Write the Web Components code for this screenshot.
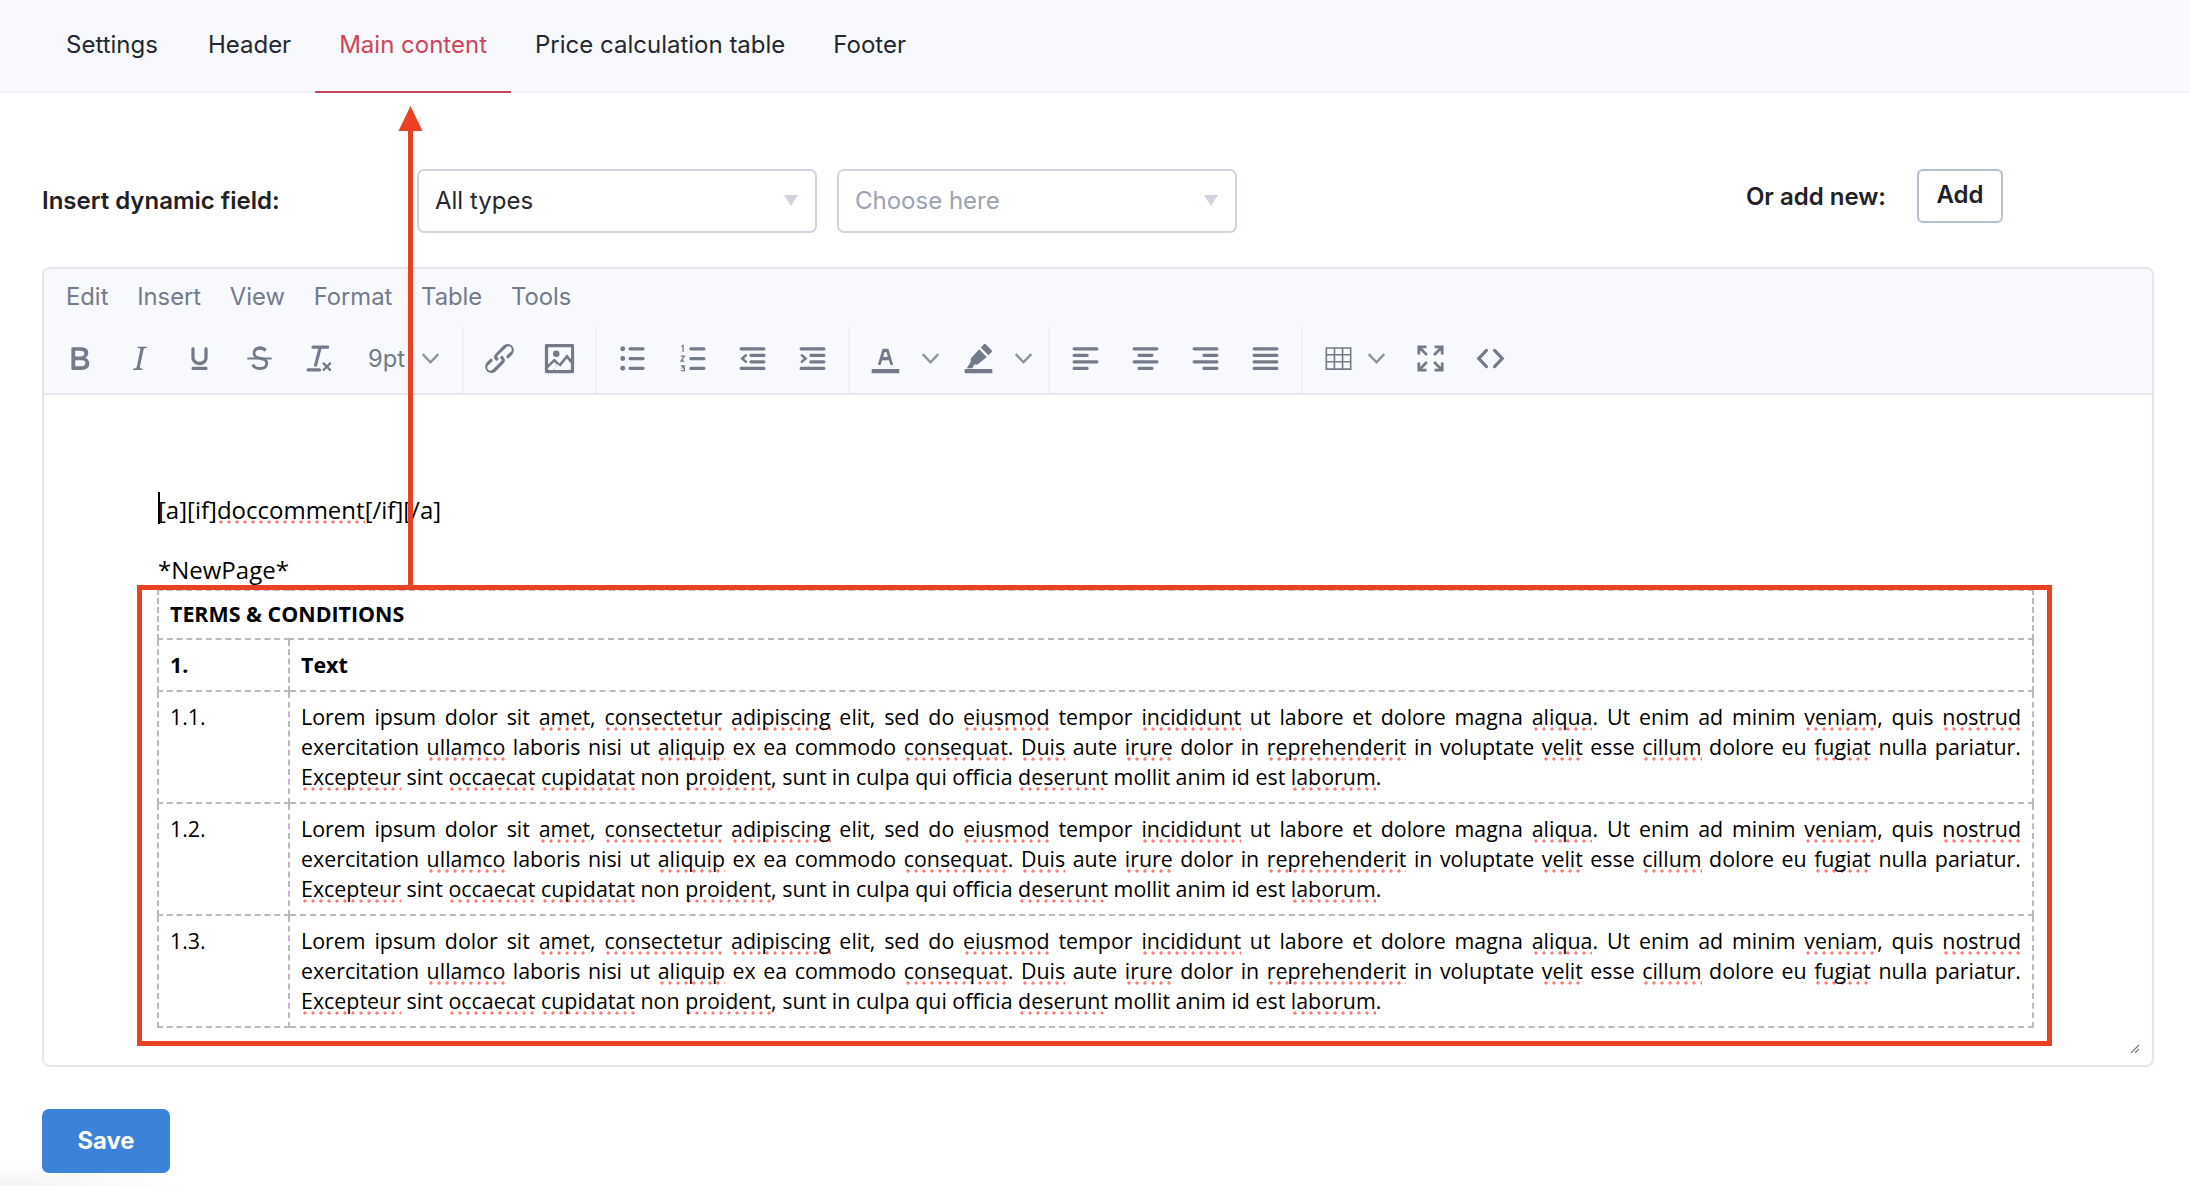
<!DOCTYPE html>
<html lang="en">
<head>
<meta charset="utf-8">
<title>Main content</title>
<style>
  html, body { margin: 0; padding: 0; }
  body {
    position: relative;
    width: 2190px;
    height: 1186px;
    overflow: hidden;
    font-family: Inter, "Liberation Sans", sans-serif;
    background: radial-gradient(ellipse 190px 22px at 0 100%, #f3f3f3, #fff);
  }
</style>
</head>
<body>
<tab-bar>
  <tab-item>Settings</tab-item>
  <tab-item>Header</tab-item>
  <tab-item active>Main content</tab-item>
  <tab-item>Price calculation table</tab-item>
  <tab-item>Footer</tab-item>
</tab-bar>
<field-row>
  <pick-list>All types</pick-list>
  <pick-list placeholder>Choose here</pick-list>
</field-row>
<rich-editor>
  <terms-table></terms-table>
</rich-editor>
<save-button>Save</save-button>
<arrow-overlay></arrow-overlay>

<script>
class TabBar extends HTMLElement {
    constructor() {
        super();
        this.attachShadow({mode: "open"});
    }
    connectedCallback() {
        this.shadowRoot.innerHTML = /* html */`
        <style>
            :host {
                display: flex;
                box-sizing: border-box;
                height: 93px;
                padding-left: 42px;
                background: #f8f9fd;
                border-bottom: 2px solid #f1f2f7;
            }
            ::slotted(tab-item:first-child) { margin-right: 2px; }
        </style>
        <slot></slot>`;
    }
}

class TabItem extends HTMLElement {
    constructor() {
        super();
        this.attachShadow({mode: "open"});
    }
    connectedCallback() {
        this.shadowRoot.innerHTML = /* html */`
        <style>
            :host {
                display: block;
                box-sizing: border-box;
                height: 93px;
                padding: 28px 24px 0;
                font: 400 24px/33px Inter, sans-serif;
                color: #25272e;
            }
            :host([active]) {
                color: #d0435a;
                border-bottom: 2px solid #d0435a;
            }
        </style>
        <slot></slot>`;
    }
}

class FieldRow extends HTMLElement {
    constructor() {
        super();
        this.attachShadow({mode: "open"});
    }
    connectedCallback() {
        this.shadowRoot.innerHTML = /* html */`
        <style>
            :host {
                display: flex;
                align-items: flex-start;
                gap: 20px;
                margin: 76px 187px 34px 42px;
                height: 64px;
            }
            .label {
                width: 355px;
                font: 600 24px/63px Inter, sans-serif;
                color: #1f2127;
            }
            .add {
                display: flex;
                align-items: center;
                gap: 31px;
                margin-left: auto;
                font: 600 24px/33px Inter, sans-serif;
                color: #1f2127;
            }
            .btn {
                box-sizing: border-box;
                width: 86px;
                height: 54px;
                border: 2px solid #b7c0cd;
                border-radius: 6px;
                text-align: center;
                line-height: 48px;
            }
        </style>
        <div class="label">Insert dynamic field:</div>
        <slot></slot>
        <div class="add"><span>Or add new:</span><div class="btn">Add</div></div>`;
    }
}

class PickList extends HTMLElement {
    constructor() {
        super();
        this.attachShadow({mode: "open"});
    }
    connectedCallback() {
        this.shadowRoot.innerHTML = /* html */`
        <style>
            :host {
                display: flex;
                align-items: center;
                justify-content: space-between;
                box-sizing: border-box;
                width: 400px;
                height: 64px;
                padding: 0 17px 1px 16px;
                border: 2px solid #d0d4e0;
                border-radius: 7px;
                font: 400 24px/33px Inter, sans-serif;
                color: #25272e;
            }
            :host([placeholder]) { color: #9ba3b2; }
            .caret {
                width: 0;
                height: 0;
                border-left: 7px solid transparent;
                border-right: 7px solid transparent;
                border-top: 11px solid #cfd3df;
            }
        </style>
        <slot></slot><span class="caret"></span>`;
    }
}

const ICONS = {
    bold: '<path d="M7.8 19c-.3 0-.5 0-.6-.2l-.2-.5V5.7c0-.2 0-.4.2-.5l.6-.2h5c1.5 0 2.7.3 3.5 1 .7.6 1.1 1.4 1.1 2.5a3 3 0 0 1-.6 1.9c-.4.6-1 1-1.6 1.2.4.1.9.3 1.3.6s.8.7 1 1.2c.4.4.5 1 .5 1.6 0 1.3-.4 2.3-1.3 3-.8.7-2.1 1-3.8 1H7.8zm5-8.3c.6 0 1.2-.1 1.6-.5.4-.3.6-.7.6-1.3 0-1.1-.8-1.7-2.3-1.7H9.3v3.5h3.4zm.5 6c.7 0 1.3-.1 1.7-.4.4-.4.6-.9.6-1.5s-.2-1-.7-1.4c-.4-.3-1-.4-2-.4H9.4v3.8h4z"/>',
    italic: '<path d="M16.7 4.7l-.1.9h-.3c-.6 0-1 0-1.4.3-.3.3-.4.6-.5 1.1l-2.1 9.8v.6c0 .5.4.8 1.4.8h.2l-.2.8H8l.2-.8h.2c1.1 0 1.8-.5 2-1.5l2-9.8.1-.5c0-.6-.4-.8-1.4-.8h-.3l.2-.9h5.8z"/>',
    underline: '<path d="M16 5c.6 0 1 .4 1 1v5.5a4 4 0 0 1-.4 1.8l-1 1.4a5.3 5.3 0 0 1-5.5 1 5 5 0 0 1-1.6-1c-.5-.4-.8-.9-1.1-1.4a4 4 0 0 1-.4-1.8V6c0-.6.4-1 1-1s1 .4 1 1v5.5c0 .3 0 .6.2 1l.6.7a3.3 3.3 0 0 0 2.2.8 3.4 3.4 0 0 0 2.2-.8c.3-.2.4-.5.6-.8l.2-.9V6c0-.6.4-1 1-1zM8 17h8c.6 0 1 .4 1 1s-.4 1-1 1H8a1 1 0 0 1 0-2z"/>',
    strike: '<path d="M15.6 8.5c-.5-.7-1-1.1-1.3-1.3-.6-.4-1.3-.6-2-.6-2.7 0-2.8 1.7-2.8 2.1 0 1.6 1.8 2 3.2 2.3 4.4.9 4.6 2.8 4.6 3.9 0 1.4-.7 4.1-5 4.1A6.2 6.2 0 0 1 7 16.4l1.5-1.1c.4.6 1.6 2 3.7 2 1.6 0 2.5-.4 3-1 .3-.4.4-.9.4-1.5 0-.8-.3-1.3-2.5-1.8-2.2-.5-5.3-1-5.3-4.2 0-3 2.3-4.4 4.5-4.4 1.6 0 2.8.6 4.3 2.1l-1.5 1z"/><path d="M4.5 11.4h15v1.2h-15z"/>',
    clear: '<path d="M13.2 6l-2.6 10.2a1 1 0 0 1-1 .8h-.2a.8.8 0 0 1-.8-1l2.6-10H8a1 1 0 1 1 0-2h9a1 1 0 0 1 0 2h-3.8zM5 18h7a1 1 0 0 1 0 2H5a1 1 0 0 1 0-2zm13 1.5L16.5 18 15 19.5a.7.7 0 0 1-1-1l1.5-1.5-1.5-1.5a.7.7 0 0 1 1-1l1.5 1.5 1.5-1.5a.7.7 0 0 1 1 1L17.5 17l1.5 1.5a.7.7 0 0 1-1 1z"/>',
    link: '<path d="M6.2 12.3a1 1 0 0 1 1.4 1.4l-2 2a2 2 0 1 0 2.6 2.8l4.8-4.8a1 1 0 0 0 0-1.4 1 1 0 1 1 1.4-1.3 2.9 2.9 0 0 1 0 4L9.6 20a3.9 3.9 0 0 1-5.5-5.5l2-2zm11.6-.6a1 1 0 0 1-1.4-1.4l2-2a2 2 0 1 0-2.6-2.8L11 10a1 1 0 0 0 0 1.4A1 1 0 1 1 9.6 13a2.9 2.9 0 0 1 0-4L14.4 4a3.9 3.9 0 0 1 5.5 5.5l-2 2z"/>',
    image: '<path d="M5 15.7l3.3-3.2c.3-.3.7-.3 1 0L12 15l4.1-5c.3-.4.8-.4 1 0l2 2.5V5H5v10.7zM5 18v1h3l2.8-2.9-2-2L5 17.9zm14-3l-2.5-3-4 5-1.6-1.6L8.4 19H19v-4zM4 3h16c.6 0 1 .4 1 1v16c0 .6-.4 1-1 1H4a1 1 0 0 1-1-1V4c0-.6.4-1 1-1zm6 8a2 2 0 1 1 0-4 2 2 0 0 1 0 4z"/>',
    bullets: '<circle cx="6" cy="6" r="1.5"/><circle cx="6" cy="12" r="1.5"/><circle cx="6" cy="18" r="1.5"/><path class="s" d="M10.5 6h8M10.5 12h8M10.5 18h8"/>',
    numbers: '<path class="s" d="M11 6h8M11 12h8M11 18h8"/><path class="t" d="M5.2 4.6l1-.6v4M5 10.6h2l-2 3h2M5 16.6h2l-1 1.2h1v1.6H5"/>',
    outdent: '<path class="s" d="M5 6h14M11 10h8M11 14h8M5 18h14"/><path class="c" d="M8 10l-2.4 2L8 14"/>',
    indent: '<path class="s" d="M5 6h14M11 10h8M11 14h8M5 18h14"/><path class="c" d="M5.4 10l2.4 2-2.4 2"/>',
    textcolor: '<path d="M3.5 18.5h17V21h-17z"/><path d="M8.7 16h-.8a.5.5 0 0 1-.5-.6l2.7-9c.1-.3.3-.4.5-.4h2.8c.2 0 .4.1.5.4l2.7 9a.5.5 0 0 1-.5.6h-.8a.5.5 0 0 1-.4-.4l-.7-2.2c0-.3-.3-.4-.5-.4h-3.4c-.2 0-.4.1-.5.4l-.7 2.2c0 .3-.2.4-.4.4zm2.6-7.6l-.6 2a.5.5 0 0 0 .5.6h1.6a.5.5 0 0 0 .5-.6l-.6-2c0-.3-.3-.4-.5-.4h-.4c-.2 0-.4.1-.5.4z"/>',
    highlight: '<path d="M3.5 18.5h17V21h-17z"/><path d="M16.6 3.4l3.4 3.3c.4.4.4 1 0 1.4l-1.9 1.9-4.7-4.7 1.8-1.9c.4-.4 1-.4 1.4 0zM12.4 6.3l4.7 4.7-5.5 4.6c-.3.2-.6.3-.9.2l-1.2-.2-1.3 2.4H4.8l2.5-4.1-.1-1.3c0-.4.1-.7.3-.9l4.9-5.4z"/>',
    alignleft: '<path class="s" d="M5 6h14M5 10h8M5 14h14M5 18h8"/>',
    aligncenter: '<path class="s" d="M5 6h14M8 10h8M5 14h14M8 18h8"/>',
    alignright: '<path class="s" d="M5 6h14M11 10h8M5 14h14M11 18h8"/>',
    justify: '<path class="s" d="M5 6h14M5 10h14M5 14h14M5 18h14"/>',
    table: '<path class="g" d="M4.5 5.5h15v13h-15zM4.5 9.7h15M4.5 14h15M9.5 5.5v13M14.5 5.5v13"/>',
    fullscreen: '<path class="f" d="M4.8 9.5V4.8h4.7M4.8 4.8l5 5M14.5 4.8h4.7v4.7M19.2 4.8l-5 5M4.8 14.5v4.7h4.7M4.8 19.2l5-5M19.2 14.5v4.7h-4.7M19.2 19.2l-5-5"/>',
    code: '<path class="c2" d="M9.5 7L4.8 12l4.7 5M14.5 7l4.7 5-4.7 5"/>',
};

class ToolIcon extends HTMLElement {
    constructor() {
        super();
        this.attachShadow({mode: "open"});
    }
    connectedCallback() {
        const name = this.getAttribute("name");
        this.shadowRoot.innerHTML = /* html */`
        <style>
            :host {
                display: flex;
                align-items: center;
                justify-content: center;
                flex: none;
                width: 60px;
                height: 62px;
            }
            :host([name="chevron"]) { width: 30px; }
            svg { width: 39px; height: 39px; flex: none; fill: #737a89; }
            .s, .c, .t, .c2, .ch, .g, .f { fill: none; stroke: #737a89; stroke-linecap: round; }
            .s { stroke-width: 2; }
            .c { stroke-width: 1.5; }
            .t { stroke-width: .8; stroke-linecap: butt; }
            .c2 { stroke-width: 2; }
            .g { stroke-width: 1; stroke-linecap: butt; }
            .f { stroke-width: 1.7; stroke-linecap: butt; }
            .ch { stroke: #8d93a0; stroke-width: 1.5; stroke-linecap: butt; }
        </style>
        <svg viewBox="0 0 24 24">${name === "chevron" ? '<path class="ch" d="M7.2 9.3l4.8 5 4.8-5"/>' : ICONS[name]}</svg>`;
    }
}

class ToolGroup extends HTMLElement {
    constructor() {
        super();
        this.attachShadow({mode: "open"});
    }
    connectedCallback() {
        this.shadowRoot.innerHTML = /* html */`
        <style>
            :host {
                display: flex;
                align-items: flex-start;
                height: 66px;
                padding: 0 6px 0 5px;
                border-right: 2px solid #f0f1f6;
            }
            :host(:last-child) { border-right: 0; }
        </style>
        <slot></slot>`;
    }
}

class FontSize extends HTMLElement {
    constructor() {
        super();
        this.attachShadow({mode: "open"});
    }
    connectedCallback() {
        this.shadowRoot.innerHTML = /* html */`
        <style>
            :host {
                display: flex;
                align-items: center;
                justify-content: space-between;
                box-sizing: border-box;
                width: 96px;
                height: 62px;
                margin-right: 11px;
                padding-left: 19px;
                font: 400 23.8px/33px Inter, sans-serif;
                color: #737a89;
            }
        </style>
        <span><slot></slot></span>
        <tool-icon name="chevron"></tool-icon>`;
    }
}

class RichEditor extends HTMLElement {
    constructor() {
        super();
        this.attachShadow({mode: "open"});
    }
    connectedCallback() {
        this.shadowRoot.innerHTML = /* html */`
        <style>
            :host {
                display: block;
                position: relative;
                box-sizing: border-box;
                width: 2112px;
                height: 800px;
                margin-left: 42px;
                border: 2px solid #e3e6ec;
                border-radius: 8px;
                overflow: hidden;
            }
            .head {
                background: #f8f9fd;
                border-bottom: 2px solid #e3e6ec;
            }
            .menu {
                display: flex;
                box-sizing: border-box;
                height: 58px;
                padding: 0 0 3px 22px;
                gap: 28.7px;
                align-items: center;
                font: 400 23.8px/33px Inter, sans-serif;
                color: #737a89;
            }
            .bar { display: flex; }
            .doc {
                padding: 100px 0 0 114px;
                font: 400 24px/30px "Open Sans", sans-serif;
                color: #000;
            }
            .doc p { margin: 0 0 30px; width: max-content; }
            .doc p.last { margin-bottom: 4px; }
            .first { position: relative; }
            .first::before {
                content: "";
                position: absolute;
                left: 0;
                top: -3px;
                width: 2px;
                height: 32px;
                background: #000;
            }
            .sp {
                background: radial-gradient(circle at center, #f47b76 1.4px, transparent 1.8px) left 0 bottom 2px / 8px 4px repeat-x;
            }
            .grip {
                position: absolute;
                right: 13px;
                bottom: 12px;
                width: 9px;
                height: 9px;
            }
        </style>
        <div class="head">
            <div class="menu"><span>Edit</span><span>Insert</span><span>View</span><span>Format</span><span>Table</span><span>Tools</span></div>
            <div class="bar">
                <tool-group>
                    <tool-icon name="bold"></tool-icon>
                    <tool-icon name="italic"></tool-icon>
                    <tool-icon name="underline"></tool-icon>
                    <tool-icon name="strike"></tool-icon>
                    <tool-icon name="clear"></tool-icon>
                    <font-size>9pt</font-size>
                </tool-group>
                <tool-group>
                    <tool-icon name="link"></tool-icon>
                    <tool-icon name="image"></tool-icon>
                </tool-group>
                <tool-group>
                    <tool-icon name="bullets"></tool-icon>
                    <tool-icon name="numbers"></tool-icon>
                    <tool-icon name="outdent"></tool-icon>
                    <tool-icon name="indent"></tool-icon>
                </tool-group>
                <tool-group style="padding-right:10px">
                    <tool-icon name="textcolor"></tool-icon>
                    <tool-icon name="chevron"></tool-icon>
                    <tool-icon name="highlight" style="margin-left:3px"></tool-icon>
                    <tool-icon name="chevron"></tool-icon>
                </tool-group>
                <tool-group>
                    <tool-icon name="alignleft"></tool-icon>
                    <tool-icon name="aligncenter"></tool-icon>
                    <tool-icon name="alignright"></tool-icon>
                    <tool-icon name="justify"></tool-icon>
                </tool-group>
                <tool-group>
                    <tool-icon name="table"></tool-icon>
                    <tool-icon name="chevron" style="margin-left:-7px"></tool-icon>
                    <tool-icon name="fullscreen" style="margin-left:9px"></tool-icon>
                    <tool-icon name="code"></tool-icon>
                </tool-group>
            </div>
        </div>
        <div class="doc">
            <p class="first">[a][if]<span class="sp">doccomment</span>[/if][/a]</p>
            <p class="last">*NewPage*</p>
            <slot></slot>
        </div>
        <svg class="grip" viewBox="0 0 9 9"><path d="M1 9L9 1M5 9L9 5" stroke="#737a89" stroke-width="1.2" fill="none"/></svg>`;
    }
}

const sp = (w) => `<span class="sp">${w}</span>`;
const LOREM = `Lorem ipsum dolor sit ${sp("amet")}, ${sp("consectetur")} ${sp("adipiscing")} elit, sed do ${sp("eiusmod")} tempor ${sp("incididunt")} ut labore et dolore magna ${sp("aliqua")}. Ut enim ad minim ${sp("veniam")}, quis ${sp("nostrud")} exercitation ${sp("ullamco")} laboris nisi ut ${sp("aliquip")} ex ea commodo ${sp("consequat")}. ${sp("Duis")} aute ${sp("irure")} dolor in ${sp("reprehenderit")} in voluptate ${sp("velit")} esse ${sp("cillum")} dolore eu ${sp("fugiat")} nulla pariatur. ${sp("Excepteur")} sint ${sp("occaecat")} ${sp("cupidatat")} non ${sp("proident")}, sunt in culpa qui officia ${sp("deserunt")} mollit anim id est ${sp("laborum")}.`;

class TermsTable extends HTMLElement {
    constructor() {
        super();
        this.attachShadow({mode: "open"});
    }
    connectedCallback() {
        const rows = ["1.1.", "1.2.", "1.3."].map((n) => `<tr><td>${n}</td><td class="txt">${LOREM}</td></tr>`).join("");
        this.shadowRoot.innerHTML = /* html */`
        <style>
            :host {
                display: block;
                width: 1877px;
                margin-left: -1px;
                font: 400 21.4px/30px "Open Sans", sans-serif;
                color: #000;
            }
            table { width: 100%; border-collapse: collapse; table-layout: fixed; }
            td { border: 2px dashed #bbb; padding: 10px 11px; vertical-align: top; }
            .n { width: 131px; }
            .txt { text-align: justify; }
            .b { font-weight: 700; }
            .title td { padding: 8px 11px 9px; }
            .sp {
                background: radial-gradient(circle at center, #f47b76 1.4px, transparent 1.8px) left 0 bottom 0 / 8px 4px repeat-x;
            }
        </style>
        <table>
            <colgroup><col class="n"><col></colgroup>
            <tr class="title"><td class="b" colspan="2">TERMS &amp; CONDITIONS</td></tr>
            <tr><td class="b">1.</td><td class="b">Text</td></tr>
            ${rows}
        </table>`;
    }
}

class SaveButton extends HTMLElement {
    constructor() {
        super();
        this.attachShadow({mode: "open"});
    }
    connectedCallback() {
        this.shadowRoot.innerHTML = /* html */`
        <style>
            :host {
                display: block;
                box-sizing: border-box;
                width: 128px;
                height: 64px;
                margin: 42px 0 0 42px;
                background: #3b82d9;
                border-radius: 7px;
                color: #fff;
                text-align: center;
                font: 700 23.8px/63px Inter, sans-serif;
            }
        </style>
        <slot></slot>`;
    }
}

class ArrowOverlay extends HTMLElement {
    constructor() {
        super();
        this.attachShadow({mode: "open"});
    }
    connectedCallback() {
        this.shadowRoot.innerHTML = /* html */`
        <style>
            :host { position: absolute; left: 0; top: 0; width: 2190px; height: 1186px; pointer-events: none; }
            svg { display: block; }
        </style>
        <svg width="2190" height="1186" viewBox="0 0 2190 1186">
            <rect x="139.5" y="587.5" width="1910" height="456" fill="none" stroke="#ea4125" stroke-width="5"/>
            <path d="M410.5 130V586" stroke="#ea4125" stroke-width="5" fill="none"/>
            <path d="M410.5 106L422.5 131H398.5Z" fill="#ea4125"/>
        </svg>`;
    }
}

customElements.define("tab-bar", TabBar);
customElements.define("tab-item", TabItem);
customElements.define("field-row", FieldRow);
customElements.define("pick-list", PickList);
customElements.define("tool-icon", ToolIcon);
customElements.define("tool-group", ToolGroup);
customElements.define("font-size", FontSize);
customElements.define("rich-editor", RichEditor);
customElements.define("terms-table", TermsTable);
customElements.define("save-button", SaveButton);
customElements.define("arrow-overlay", ArrowOverlay);
</script>
</body>
</html>
